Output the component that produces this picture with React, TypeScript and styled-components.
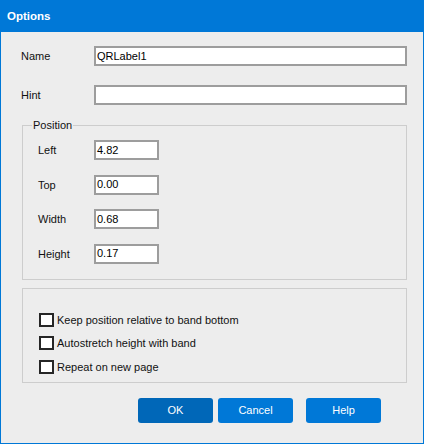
import React from "react";
import styled, { createGlobalStyle } from "styled-components";

const Global = createGlobalStyle`
  html, body { margin: 0; padding: 0; background: #ededed; }
  body { font-family: "Liberation Sans", Arial, sans-serif; font-size: 11px; color: #111; }
  * { box-sizing: border-box; }
`;

const Window = styled.div`
  width: 424px;
  height: 444px;
  border: 1px solid #0078d7;
  border-top: none;
  background: #ededed;
  display: flex;
  flex-direction: column;
`;

const TitleBar = styled.div`
  height: 32px;
  margin: 0 -1px;
  background: #0078d7;
  color: #fff;
  font-weight: bold;
  font-size: 11.5px;
  display: flex;
  align-items: center;
  padding-left: 7px;
  flex: none;
`;

const Body = styled.div`
  padding: 14px 16px 0 20px;
  display: flex;
  flex-direction: column;
`;

const FieldGrid = styled.div`
  display: grid;
  grid-template-columns: 73px 313px;
  row-gap: 19px;
  align-items: center;
`;

const Label = styled.span`
  color: #111;
  white-space: nowrap;
`;

const TextBox = styled.div<{ $w?: number }>`
  width: ${(p) => (p.$w ? `${p.$w}px` : "100%")};
  height: 20px;
  border: 2px solid #9d9d9d;
  background: #fff;
  color: #000;
  padding-left: 1px;
  display: flex;
  align-items: center;
  line-height: 1;
`;

const Group = styled.div<{ $mt: number; $pad: string }>`
  margin-top: ${(p) => p.$mt}px;
  margin-left: 1px;
  width: 385px;
  border: 1px solid #cdcdcd;
  padding: ${(p) => p.$pad};
  display: flex;
  flex-direction: column;
`;

const Caption = styled.span`
  align-self: flex-start;
  margin: -7px 0 0 9px;
  padding: 0 1px;
  background: #ededed;
  line-height: 13px;
`;

const PosGrid = styled.div`
  display: grid;
  grid-template-columns: 56px 65px;
  row-gap: 14.5px;
  align-items: center;
  margin-top: 8px;
  padding-left: 15px;
`;

const CheckList = styled.div`
  display: flex;
  flex-direction: column;
  gap: 9.5px;
`;

const CheckRow = styled.label`
  display: flex;
  align-items: center;
  gap: 3px;
  height: 14px;
`;

const Box = styled.span`
  width: 15px;
  height: 14px;
  border: 2px solid #262626;
  background: #fff;
  flex: none;
`;

const Buttons = styled.div`
  display: flex;
  margin-top: 15px;
  padding-left: 117px;
`;

const Button = styled.button<{ $primary?: boolean; $ml?: number }>`
  width: 75px;
  height: 25px;
  margin-left: ${(p) => p.$ml ?? 0}px;
  border: none;
  border-radius: 3px;
  background: ${(p) => (p.$primary ? "#0067b8" : "#0078d7")};
  color: #fff;
  font-family: "Liberation Sans", Arial, sans-serif;
  font-size: 11px;
  padding: 0;
`;

const rows = [
  ["Left", "4.82"],
  ["Top", "0.00"],
  ["Width", "0.68"],
  ["Height", "0.17"],
];

const checks = [
  "Keep position relative to band bottom",
  "Autostretch height with band",
  "Repeat on new page",
];

export default function App() {
  return (
    <>
      <Global />
      <Window>
        <TitleBar>Options</TitleBar>
        <Body>
          <FieldGrid>
            <Label>Name</Label>
            <TextBox>QRLabel1</TextBox>
            <Label>Hint</Label>
            <TextBox />
          </FieldGrid>
          <Group $mt={20} $pad="0 0 15px 0">
            <Caption>Position</Caption>
            <PosGrid>
              {rows.map(([l, v]) => (
                <React.Fragment key={l}>
                  <Label>{l}</Label>
                  <TextBox $w={65}>{v}</TextBox>
                </React.Fragment>
              ))}
            </PosGrid>
          </Group>
          <Group $mt={8} $pad="24px 0 8px 16px">
            <CheckList>
              {checks.map((c) => (
                <CheckRow key={c}>
                  <Box />
                  <Label>{c}</Label>
                </CheckRow>
              ))}
            </CheckList>
          </Group>
          <Buttons>
            <Button $primary>OK</Button>
            <Button $ml={5}>Cancel</Button>
            <Button $ml={13}>Help</Button>
          </Buttons>
        </Body>
      </Window>
    </>
  );
}
